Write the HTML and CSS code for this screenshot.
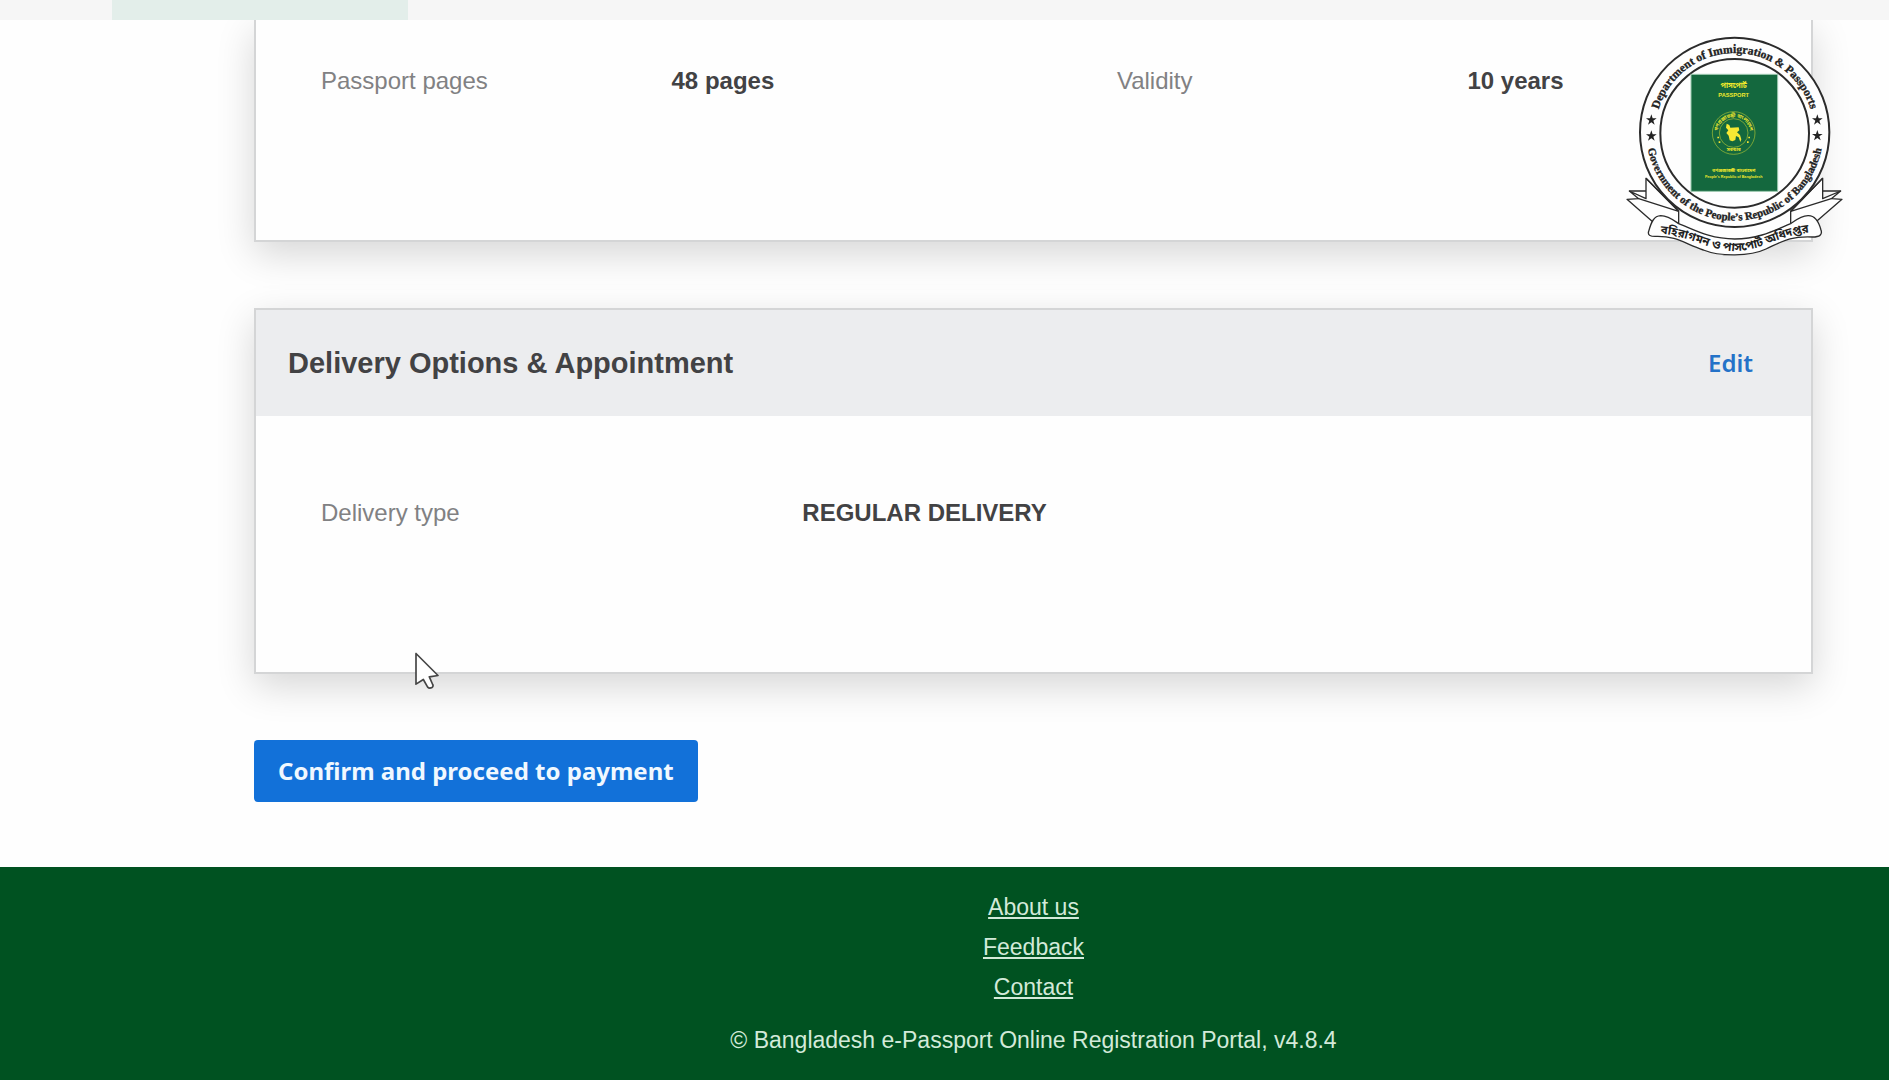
FILE: index.html
```html
<!DOCTYPE html>
<html lang="en">
<head>
<meta charset="utf-8">
<meta name="viewport" content="width=device-width, initial-scale=1">
<title>Bangladesh e-Passport Online Registration Portal</title>
<link rel="stylesheet" href="styles.css">
</head>
<body>
<div class="topbar"><div class="topbar-active"></div></div>

<main class="content">
  <section class="card card-continued">
    <dl class="card-body fields">
      <dt>Passport pages</dt><dd>48 pages</dd>
      <dt>Validity</dt><dd>10 years</dd>
    </dl>
  </section>

  <section class="card">
    <header class="card-header">
      <h2>Delivery Options &amp; Appointment</h2>
      <a class="edit" href="#edit">Edit</a>
    </header>
    <dl class="card-body fields-single">
      <dt>Delivery type</dt><dd>REGULAR DELIVERY</dd>
    </dl>
  </section>

  <button class="confirm" type="button">Confirm and proceed to payment</button>
</main>

<footer class="footer">
  <nav class="links">
    <a href="#about">About us</a>
    <a href="#feedback">Feedback</a>
    <a href="#contact">Contact</a>
  </nav>
  <p class="copyright">© Bangladesh e-Passport Online Registration Portal, v4.8.4</p>
</footer>

<svg class="emblem" viewBox="0 0 750 750" role="img" aria-label="Department of Immigration &amp; Passports">
  <defs>
    <path id="arc-top" d="M136 337A238 238 0 0 1 612 337"/>
    <path id="arc-bottom" d="M109 337A265 265 0 0 0 639 337"/>
    <path id="arc-ribbon" d="M130 640C230 640 290 693 374 693S510 640 618 636"/>
    <path id="arc-seal" d="M322 340A49 49 0 0 1 420 340"/>
    <path id="star" d="M0-17L4-5H16L6 2L10 14L0 7L-10 14L-6 2L-16-5H-4Z"/>
  </defs>
  <g class="line">
    <path d="M108 475L108 536L58 513L86 536L51 538L128 605L206 612L206 574Z"/>
    <path d="M58 513H108M108 475L206 574M86 536L206 574"/>
    <path d="M638 475L638 536L692 513L664 536L696 538L618 605L542 612L542 574Z"/>
    <path d="M692 513H638M638 475L542 574M664 536L542 574"/>
    <path d="M206 611C190 600 176 588 152 587C132 588 124 605 116 634C112 646 122 650 140 649C200 648 225 672 280 690C330 710 420 710 468 687C520 663 540 648 608 651C628 651 638 645 633 630C626 604 616 586 594 587C572 588 558 600 542 611C500 628 450 657 374 657S250 628 206 611Z"/>
    <circle class="ring" cx="374" cy="337" r="284"/>
    <circle class="ring" cx="374" cy="340" r="223"/>
  </g>
  <g class="ring-text">
    <text font-size="35"><textPath href="#arc-top" startOffset="50%">Department of Immigration &amp; Passports</textPath></text>
    <text font-size="33"><textPath href="#arc-bottom" startOffset="50%">Government of the People’s Republic of Bangladesh</textPath></text>
  </g>
  <text class="ribbon-text"><textPath href="#arc-ribbon" startOffset="50%">বহিরাগমন ও পাসপোর্ট অধিদপ্তর</textPath></text>
  <g fill="#222">
    <use href="#star" x="124" y="300"/><use href="#star" x="124" y="348"/>
    <use href="#star" x="622" y="300"/><use href="#star" x="622" y="347"/>
  </g>
  <rect x="243" y="163" width="260" height="351" fill="#14683e" stroke="#9dc9b0" stroke-width="3"/>
  <g class="cover">
    <text x="371" y="204" font-size="22">পাসপোর্ট</text>
    <text x="371" y="231" font-size="17">PASSPORT</text>
    <circle cx="371" cy="339" r="64"/>
    <circle cx="371" cy="339" r="43"/>
    <text font-size="15"><textPath href="#arc-seal" startOffset="50%">গণপ্রজাতন্ত্রী বাংলাদেশ</textPath></text>
    <text x="371" y="394" font-size="14">সরকার</text>
    <path class="map" d="M350 311L358 315L361 323L386 322L388 331L381 337L390 345L394 358L391 366L386 352L378 348L376 360L367 364L359 361L356 347L349 339L355 331L348 323Z"/>
    <path class="map" d="M322 350h5v5h-5zM326 364h5v5h-5zM415 350h5v5h-5zM411 364h5v5h-5z"/>
    <text x="371" y="455" font-size="14">গণপ্রজাতন্ত্রী বাংলাদেশ</text>
    <text x="371" y="475" font-size="11">People’s Republic of Bangladesh</text>
  </g>
</svg>

<svg class="cursor" viewBox="0 0 72 110" aria-hidden="true">
  <path d="M3 4V96L25 82L38 105Q43 110 51 106Q56 102 53 97L43 74L69 70Z"/>
</svg>
</body>
</html>
```
FILE: styles.css
```css
* { box-sizing: border-box; }

body {
  position: relative;
  display: flex;
  flex-direction: column;
  min-height: 100vh;
  margin: 0;
  background: #fefefe;
  color: #424244;
  font: 24px/32px "Liberation Sans", Arial, sans-serif;
}

.topbar {
  position: relative;
  z-index: 1;
  height: 20px;
  padding-left: 112px;
  background: #f6f6f6;
}

.topbar-active {
  width: 296px;
  height: 100%;
  background: #e3eeea;
}

.content {
  display: flex;
  flex-direction: column;
  align-items: flex-start;
  padding: 0 76px 65px 254px;
}

.card {
  width: 100%;
  margin-bottom: 66px;
  border: 2px solid #d4d5d6;
  background: #fefefe;
  box-shadow: 0 12px 36px rgba(0, 0, 0, 0.16);
}

.card-continued { border-top: 0; }

.card-header {
  display: flex;
  align-items: center;
  justify-content: space-between;
  padding: 36px 58px 36px 32px;
  background: #ecedef;
}

h2 {
  margin: 0;
  font-size: 29px;
  line-height: 34px;
}

.edit {
  color: #2472c8;
  font: 600 24px/32px "Noto Sans", sans-serif;
  text-decoration: none;
}

.card-body {
  display: grid;
  margin: 0;
  padding: 81px 0 143px 65px;
}

.card-continued .card-body { padding-top: 45px; }

.fields { grid-template-columns: 351fr 446fr 351fr 344fr; }

.fields-single { grid-template-columns: 482fr 1010fr; }

dt { color: #818183; }

dd {
  margin: 0;
  font-weight: 700;
}

.confirm {
  padding: 15px 24px;
  border: 0;
  border-radius: 4px;
  background: #1271d9;
  color: #f0f8ff;
  font: 700 24px/32px "Noto Sans", sans-serif;
}

.footer {
  flex: 1;
  padding: 20px 76px 12px 254px;
  background: #005221;
  color: #d3ead9;
  font-size: 23px;
  text-align: center;
}

.links {
  display: flex;
  flex-direction: column;
  align-items: center;
  line-height: 40px;
}

.links a { color: inherit; }

.copyright { margin: 17px 0 0; }

.emblem {
  position: absolute;
  z-index: 2;
  top: 20px;
  right: 29px;
  width: 250px;
  height: 250px;
}

.line {
  fill: #fefefe;
  stroke: #2b2b2b;
  stroke-width: 4;
  stroke-linejoin: round;
}

.line .ring { stroke-width: 6; }

.ring-text {
  fill: #222;
  stroke: #222;
  stroke-width: 1;
  font-family: "Liberation Serif", "Times New Roman", serif;
  font-weight: 700;
  text-anchor: middle;
}

.ribbon-text {
  fill: #222;
  font: 700 35px "Noto Sans Bengali", "Noto Sans", sans-serif;
  text-anchor: middle;
}

.cover {
  fill: #f0e92c;
  font-family: "Liberation Sans", "Noto Sans Bengali", sans-serif;
  font-weight: 700;
  text-anchor: middle;
}

.cover circle {
  fill: none;
  stroke: #a9c335;
  stroke-width: 2;
}

.cover .map { fill: #f7e833; }

.cursor {
  position: absolute;
  z-index: 3;
  top: 652px;
  left: 415px;
  width: 24px;
  height: 37px;
  fill: #fefefe;
  stroke: #444;
  stroke-width: 5;
  stroke-linejoin: round;
}
```
